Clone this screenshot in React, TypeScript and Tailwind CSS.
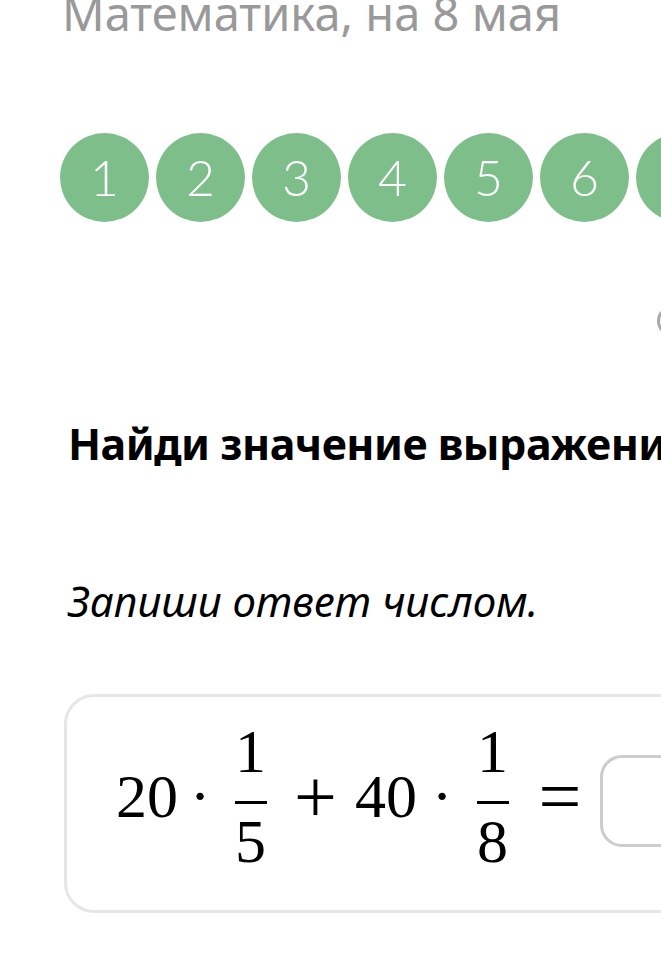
const steps = [1, 2, 3, 4, 5, 6, 7, 8, 9, 10];

function Fraction({ num, den }: { num: string; den: string }) {
  return (
    <span className="flex w-[55px] flex-col items-center">
      <span className="leading-[62px]">{num}</span>
      <span className="mt-[19px] h-[3px] w-[32px] bg-black" />
      <span className="mt-[6px] leading-[62px]">{den}</span>
    </span>
  );
}

export default function App() {
  return (
    <div className="relative h-[954px] w-[661px] overflow-hidden bg-white">
      <div className="w-[1100px] pl-[60px]">
        <h1 className="-mt-[10px] ml-[2px] whitespace-nowrap font-['Noto_Sans',sans-serif] text-[47px] leading-[47px] text-[#999999]">
          Математика, на 8 мая
        </h1>

        <div className="mt-[96px] flex gap-[7px]">
          {steps.map((n) => (
            <div
              key={n}
              className="flex h-[89px] w-[89px] shrink-0 items-center justify-center rounded-full bg-[#7dbe8b] font-['Lato',sans-serif] text-[50px] font-light text-white"
            >
              {n}
            </div>
          ))}
        </div>

        <div className="mt-[84px] pl-[597px]">
          <div className="h-[30px] w-[30px] rounded-full border-[3px] border-[#a9a9a9]" />
        </div>

        <h2 className="mt-[86px] ml-[8px] whitespace-nowrap font-['Noto_Sans',sans-serif] text-[43px] font-bold leading-[43px] tracking-[-0.5px] text-black">
          Найди значение выражения.
        </h2>

        <p className="mt-[115px] ml-[8px] whitespace-nowrap font-['Noto_Sans',sans-serif] text-[42px] italic leading-[42px] text-black">
          Запиши ответ числом.
        </p>

        <div className="mt-[72px] ml-[4px] h-[219px] w-[900px] rounded-[30px] border-[3px] border-[#e6e6e6] pt-[23px] pl-[50px]">
          <div className="flex items-center font-['Liberation_Serif',serif] text-[62px] leading-[62px] text-black">
            <span className="flex w-[60px] justify-center">20</span>
            <span className="flex w-[46px] justify-center">·</span>
            <Fraction num="1" den="5" />
            <span className="flex w-[75px] justify-center text-[76px] leading-[76px]">+</span>
            <span className="flex w-[66px] justify-center">40</span>
            <span className="flex w-[46px] justify-center">·</span>
            <Fraction num="1" den="8" />
            <span className="flex w-[80px] justify-center text-[76px] leading-[76px]">=</span>
            <div className="mt-[10px] h-[92px] w-[160px] shrink-0 rounded-[22px] border-[3px] border-[#cccccc]" />
          </div>
        </div>
      </div>
    </div>
  );
}
